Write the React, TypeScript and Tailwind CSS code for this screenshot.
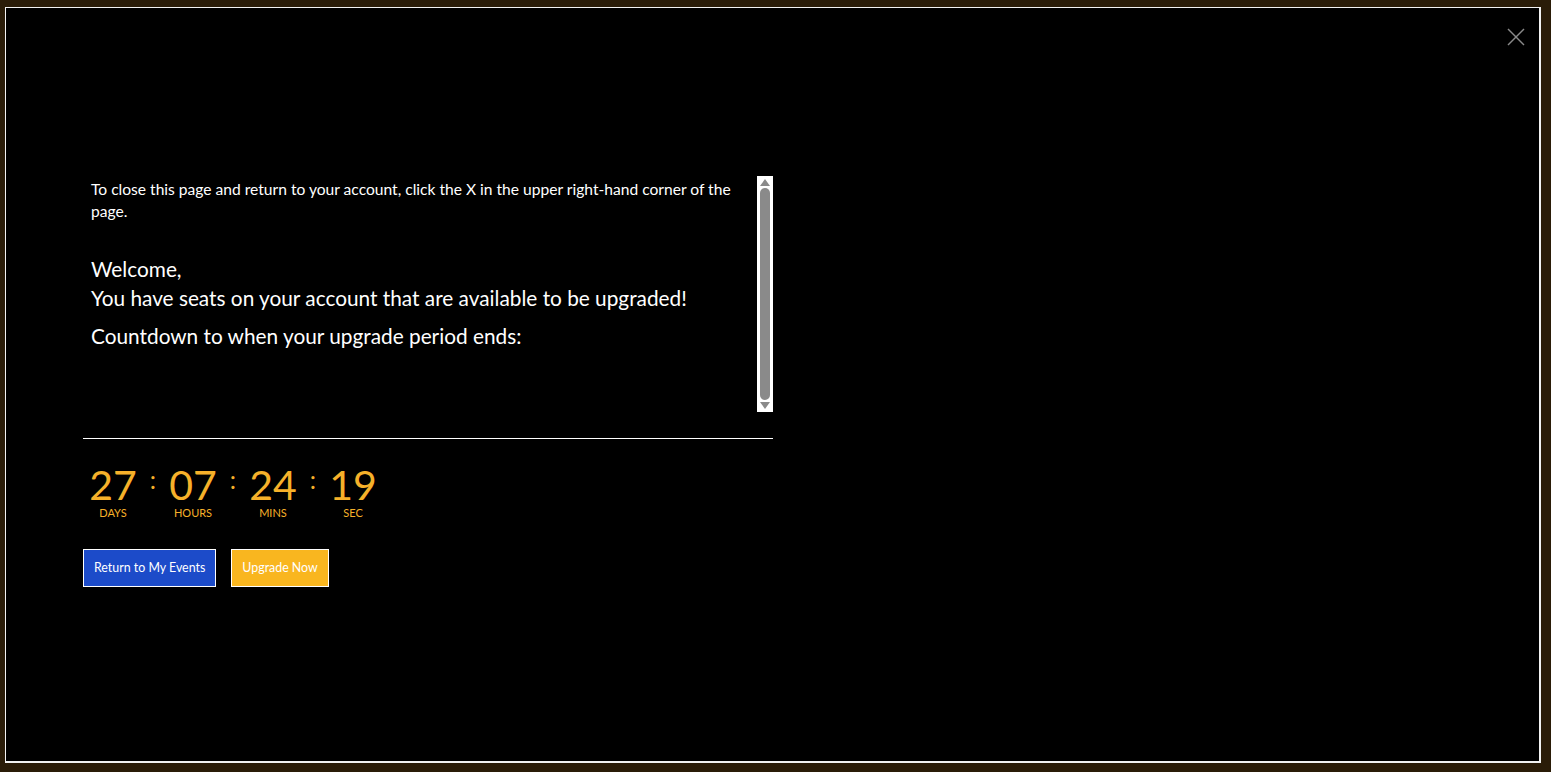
import React from "react";

function Unit({ value, label }: { value: string; label: string }) {
  return (
    <div className="flex flex-col items-center w-[44px]">
      <div className="text-[41px] leading-[44px] text-[#f6b12a]">{value}</div>
      <div className="text-[11px] leading-[14px] -mt-[1px] text-[#f6b12a] whitespace-nowrap">{label}</div>
    </div>
  );
}

function Colon() {
  return <div className="w-[36px] text-center text-[25px] leading-[25px] text-[#f6b12a] -mt-[24px]">:</div>;
}

export default function App() {
  return (
    <div
      className="w-[1551px] h-[772px] p-[7px_10px_9px_5px] bg-[#2a1c08] overflow-hidden"
      style={{ fontFamily: '"Lato", "Open Sans", sans-serif' }}
    >
      <div className="relative w-[1536px] h-[756px] bg-black border-2 border-white/95 border-l-[1px] border-t-[1px] pl-[77px] pt-[168px]">
        <button className="absolute right-[13px] top-[19px] w-[20px] h-[20px]">
          <svg viewBox="0 0 20 20" width="20" height="20" stroke="#8a8a8a" strokeWidth="1.5">
            <line x1="2" y1="2" x2="18" y2="18" />
            <line x1="18" y1="2" x2="2" y2="18" />
          </svg>
        </button>
        <div className="w-[690px]">
          <div className="flex h-[236px]">
            <div className="flex-1 pl-[8px] pt-[2px] text-white">
              <p className="text-[15.6px] leading-[22px] pr-[20px]">
                To close this page and return to your account, click the X in the upper right-hand corner of the page.
              </p>
              <p className="text-[20.8px] leading-[29px] mt-[32px]">Welcome,</p>
              <p className="text-[20.8px] leading-[29px]">You have seats on your account that are available to be upgraded!</p>
              <p className="text-[20.8px] leading-[29px] mt-[9px]">Countdown to when your upgrade period ends:</p>
            </div>
            <div className="w-[16px] bg-white flex flex-col items-center py-[3px]">
              <svg width="10" height="7" viewBox="0 0 10 7"><path d="M5 0 L10 7 L0 7 Z" fill="#8a8a8a" /></svg>
              <div className="w-[10px] flex-1 my-[2px] bg-[#8a8a8a] rounded-[5px]" />
              <svg width="10" height="7" viewBox="0 0 10 7"><path d="M0 0 L10 0 L5 7 Z" fill="#8a8a8a" /></svg>
            </div>
          </div>
          <div className="h-px bg-white mt-[26px]" />
          <div className="flex items-center mt-[24px] pl-[8px]">
            <Unit value="27" label="DAYS" />
            <Colon />
            <Unit value="07" label="HOURS" />
            <Colon />
            <Unit value="24" label="MINS" />
            <Colon />
            <Unit value="19" label="SEC" />
          </div>
          <div className="flex gap-[15px] mt-[29px]">
            <button className="h-[38px] px-[10px] bg-[#1c4bc9] border border-white text-white text-[12.4px]">
              Return to My Events
            </button>
            <button className="h-[38px] px-[10px] bg-[#f9b61f] border border-white text-white text-[12.4px]">
              Upgrade Now
            </button>
          </div>
        </div>
      </div>
    </div>
  );
}
